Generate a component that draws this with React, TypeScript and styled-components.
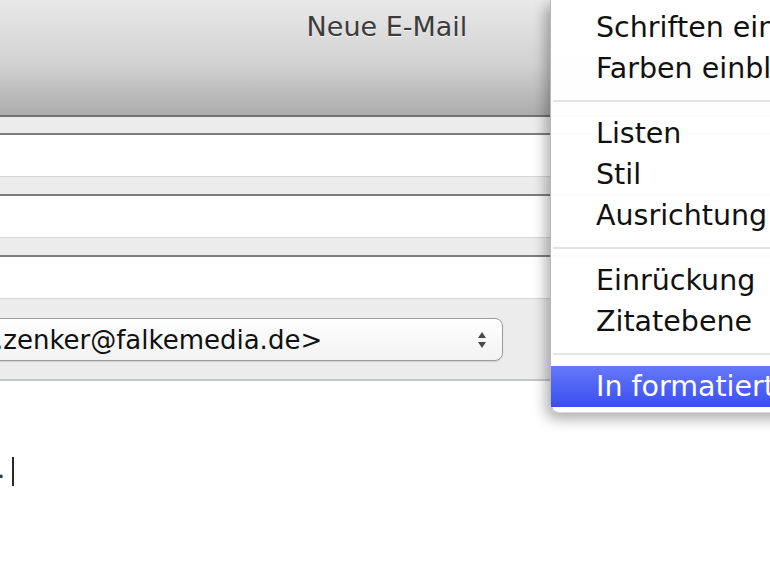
import React from "react";
import styled, { createGlobalStyle } from "styled-components";

const Global = createGlobalStyle`
  html, body { margin: 0; padding: 0; background: #fff; }
  body { font-family: "DejaVu Sans", "Liberation Sans", sans-serif; }
`;

const Page = styled.div`
  position: relative;
  width: 770px;
  height: 578px;
  overflow: hidden;
  background: #fff;
  display: flex;
  flex-direction: column;
`;

const Toolbar = styled.div`
  flex: none;
  height: 102px;
  padding-top: 13px;
  background: linear-gradient(#e9e9e9 0%, #d2d2d2 55%, #acacac 100%);
  border-bottom: 2px solid #727272;
  display: flex;
  justify-content: center;
`;

const Title = styled.div`
  font-size: 27px;
  line-height: 27px;
  color: #3c3c3c;
  text-shadow: 0 1px 0 rgba(255, 255, 255, 0.7);
  margin-left: 4px;
`;

const Header = styled.div`
  flex: none;
  background: #ececec;
  padding-top: 16px;
  display: flex;
  flex-direction: column;
  border-bottom: 2px solid #c2c6ca;
`;

const Field = styled.div<{ $last?: boolean }>`
  height: 41px;
  background: #fff;
  border-top: 2px solid #7d7d7d;
  border-bottom: 1px solid #d6d6d6;
  margin-bottom: ${(p) => (p.$last ? "0" : "17px")};
`;

const PopupRow = styled.div`
  padding: 19px 0 18px;
  display: flex;
`;

const Popup = styled.div`
  width: 507px;
  height: 41px;
  margin-left: -10px;
  border: 1px solid #9c9c9c;
  border-radius: 8px;
  background: linear-gradient(#ffffff, #f2f2f2);
  box-shadow: 0 1px 1px rgba(0, 0, 0, 0.12);
  display: flex;
  align-items: center;
  padding-left: 4px;
`;

const PopupText = styled.span`
  font-size: 26px;
  line-height: 26px;
  color: #111;
  white-space: nowrap;
`;

const Arrows = styled.svg`
  margin-left: auto;
  margin-right: 15px;
  flex: none;
`;

const Body = styled.div`
  flex: 1;
  background: #fff;
`;

const Line = styled.div`
  margin-top: 76px;
  height: 29px;
  display: flex;
  align-items: flex-end;
`;

const Dot = styled.span`
  font-size: 26px;
  line-height: 26px;
  color: #333;
  margin-left: -3px;
  margin-bottom: 4px;
`;

const Caret = styled.span`
  width: 2px;
  height: 29px;
  background: #2a2a2a;
  margin-left: 7px;
`;

const Menu = styled.div`
  position: absolute;
  left: 550px;
  top: 0;
  width: 520px;
  padding: 7px 0 5px;
  background: rgba(255, 255, 255, 0.98);
  border-left: 1px solid rgba(0, 0, 0, 0.28);
  border-bottom: 1px solid rgba(0, 0, 0, 0.15);
  border-bottom-left-radius: 10px;
  box-shadow: -4px 6px 14px rgba(0, 0, 0, 0.32);
  display: flex;
  flex-direction: column;
`;

const Item = styled.div<{ $active?: boolean }>`
  height: 41px;
  line-height: 41px;
  padding-left: 45px;
  font-size: 28.5px;
  white-space: nowrap;
  color: ${(p) => (p.$active ? "#fff" : "#111")};
  background: ${(p) =>
    p.$active ? "linear-gradient(#6579f9, #3a4ef1)" : "transparent"};
`;

const Separator = styled.div`
  height: 24px;
  display: flex;
  align-items: center;
  padding-left: 2px;
  &::after {
    content: "";
    flex: 1;
    height: 2px;
    background: #e4e4e4;
  }
`;

export default function App() {
  return (
    <>
      <Global />
      <Page>
        <Toolbar>
          <Title>Neue E-Mail</Title>
        </Toolbar>
        <Header>
          <Field />
          <Field />
          <Field $last />
          <PopupRow>
            <Popup>
              <PopupText>.zenker@falkemedia.de&gt;</PopupText>
              <Arrows width="10" height="20" viewBox="0 0 10 20">
                <path d="M5 2 L9 8 L1 8 Z" fill="#4a4a4a" />
                <path d="M5 18 L9 12 L1 12 Z" fill="#4a4a4a" />
              </Arrows>
            </Popup>
          </PopupRow>
        </Header>
        <Body>
          <Line>
            <Dot>.</Dot>
            <Caret />
          </Line>
        </Body>
        <Menu>
          <Item>Schriften einblenden</Item>
          <Item>Farben einblenden</Item>
          <Separator />
          <Item>Listen</Item>
          <Item>Stil</Item>
          <Item>Ausrichtung</Item>
          <Separator />
          <Item>Einrückung</Item>
          <Item>Zitatebene</Item>
          <Separator />
          <Item $active>In formatierten Text umwandeln</Item>
        </Menu>
      </Page>
    </>
  );
}
